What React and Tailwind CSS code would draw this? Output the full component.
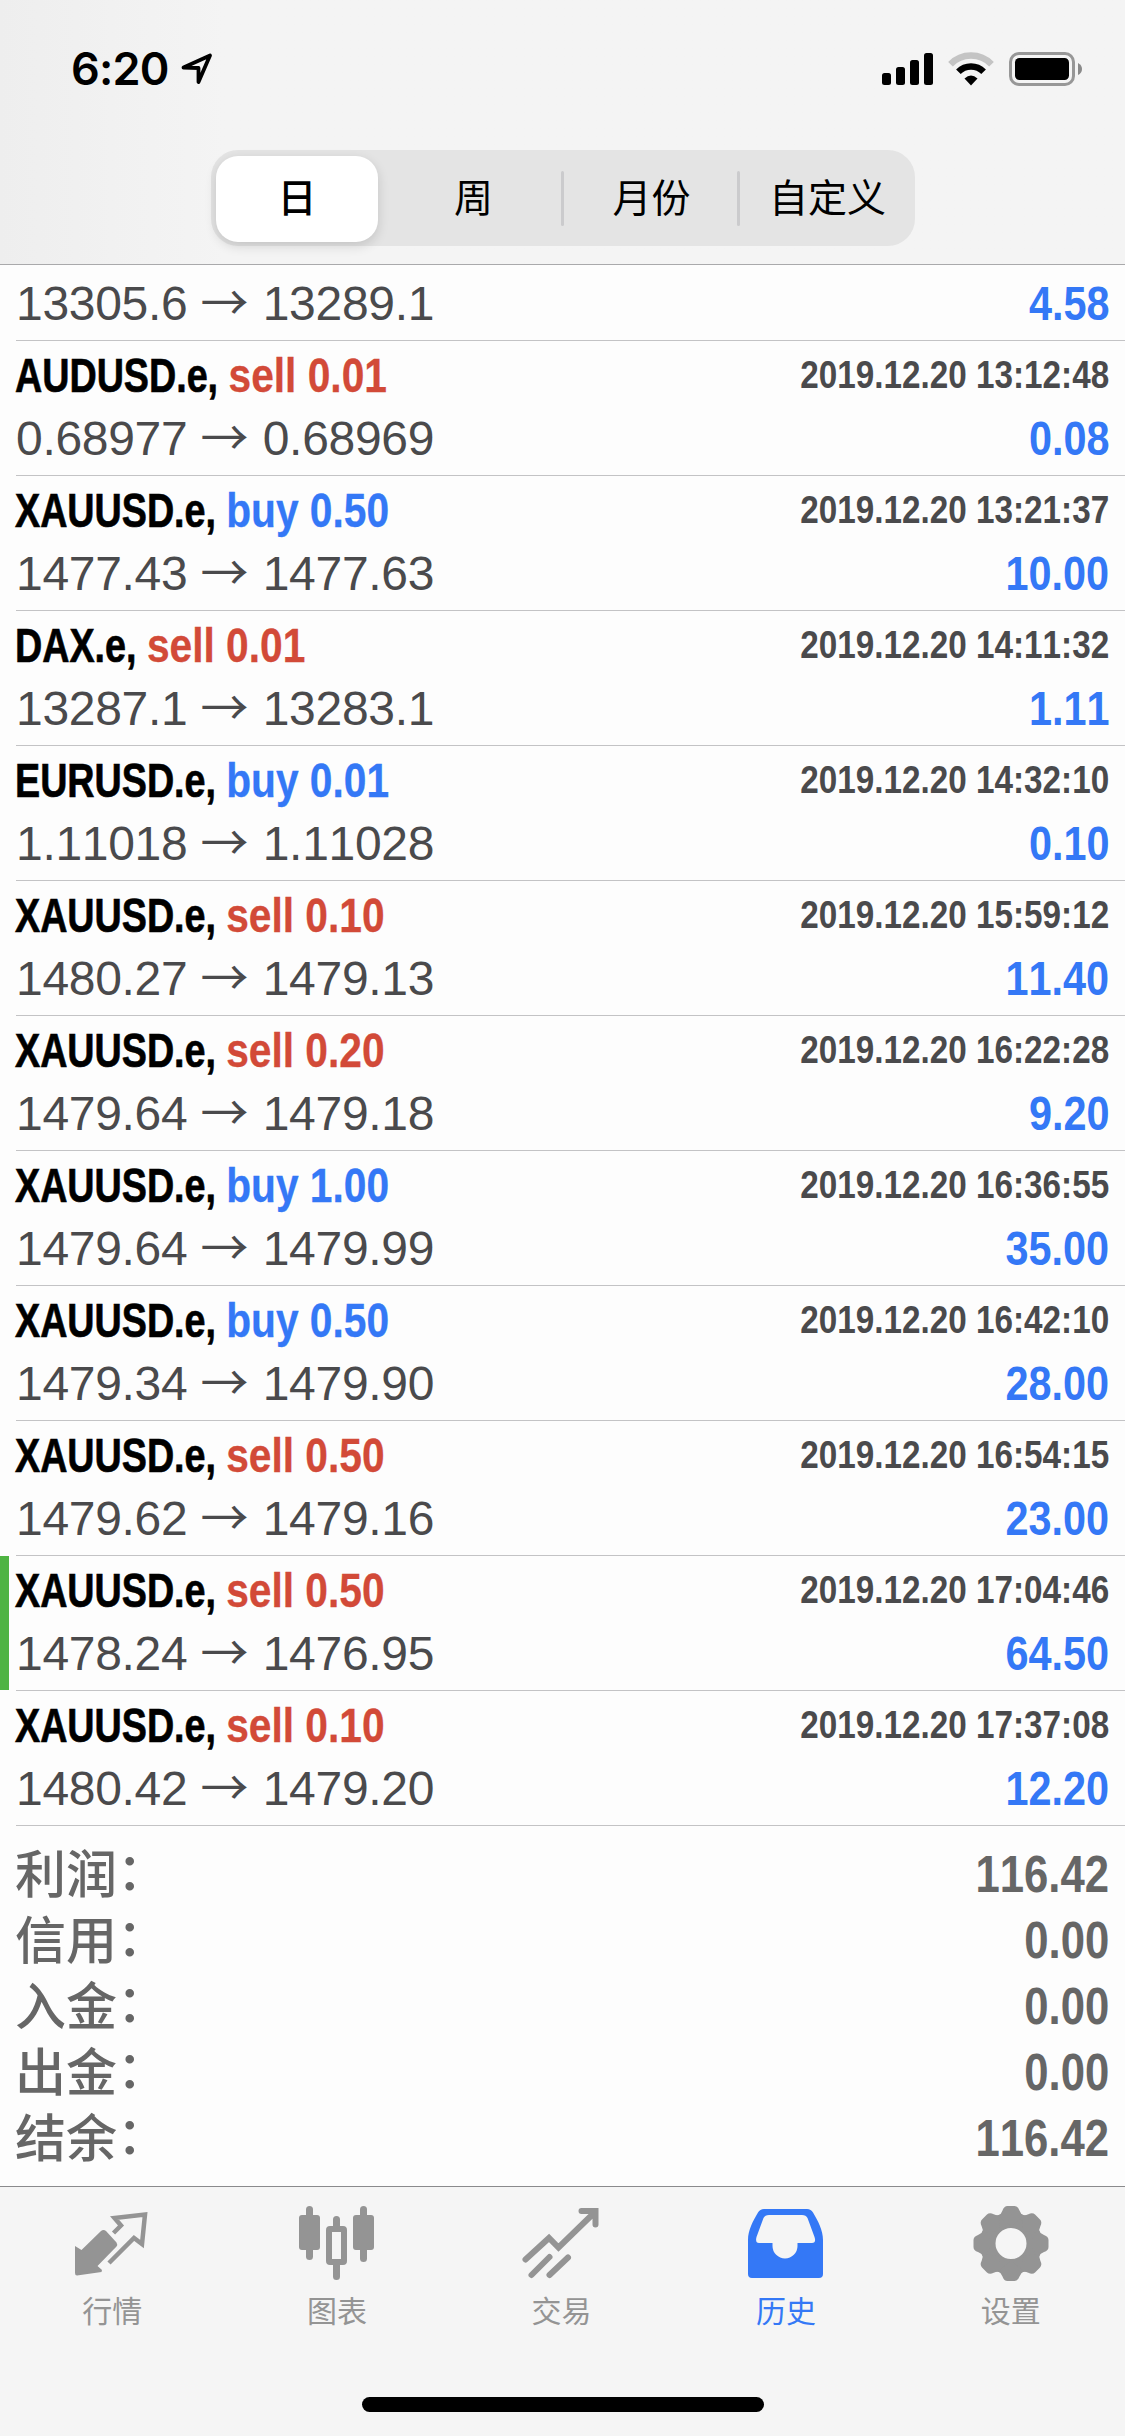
const TRADES = [
  { symbol: 'AUDUSD.e', side: 'sell', lots: '0.01', open: '0.68977', close: '0.68969', time: '2019.12.20 13:12:48', profit: '0.08' },
  { symbol: 'XAUUSD.e', side: 'buy', lots: '0.50', open: '1477.43', close: '1477.63', time: '2019.12.20 13:21:37', profit: '10.00' },
  { symbol: 'DAX.e', side: 'sell', lots: '0.01', open: '13287.1', close: '13283.1', time: '2019.12.20 14:11:32', profit: '1.11' },
  { symbol: 'EURUSD.e', side: 'buy', lots: '0.01', open: '1.11018', close: '1.11028', time: '2019.12.20 14:32:10', profit: '0.10' },
  { symbol: 'XAUUSD.e', side: 'sell', lots: '0.10', open: '1480.27', close: '1479.13', time: '2019.12.20 15:59:12', profit: '11.40' },
  { symbol: 'XAUUSD.e', side: 'sell', lots: '0.20', open: '1479.64', close: '1479.18', time: '2019.12.20 16:22:28', profit: '9.20' },
  { symbol: 'XAUUSD.e', side: 'buy', lots: '1.00', open: '1479.64', close: '1479.99', time: '2019.12.20 16:36:55', profit: '35.00' },
  { symbol: 'XAUUSD.e', side: 'buy', lots: '0.50', open: '1479.34', close: '1479.90', time: '2019.12.20 16:42:10', profit: '28.00' },
  { symbol: 'XAUUSD.e', side: 'sell', lots: '0.50', open: '1479.62', close: '1479.16', time: '2019.12.20 16:54:15', profit: '23.00' },
  { symbol: 'XAUUSD.e', side: 'sell', lots: '0.50', open: '1478.24', close: '1476.95', time: '2019.12.20 17:04:46', profit: '64.50', marked: true },
  { symbol: 'XAUUSD.e', side: 'sell', lots: '0.10', open: '1480.42', close: '1479.20', time: '2019.12.20 17:37:08', profit: '12.20' },
]

const SUMMARY = [
  ['利润', '116.42'],
  ['信用', '0.00'],
  ['入金', '0.00'],
  ['出金', '0.00'],
  ['结余', '116.42'],
]

const TABS = [
  { label: '行情', Icon: QuotesIcon },
  { label: '图表', Icon: ChartIcon },
  { label: '交易', Icon: TradeIcon },
  { label: '历史', Icon: HistoryIcon, active: true },
  { label: '设置', Icon: SettingsIcon },
]

export default function App() {
  return (
    <div className="flex h-[2436px] w-[1125px] flex-col overflow-hidden bg-[#fdfdfd] font-['Liberation_Sans','Noto_Sans_CJK_SC',sans-serif] [font-kerning:none]">
      <header className="h-[265px] shrink-0 border-b border-[#a9a9ab] bg-[#f4f4f4] bg-linear-to-r from-[#eeeeee] to-[#f4f4f4] to-20%">
        <StatusBar />
        <RangePicker />
      </header>

      <main className="h-[1921px] shrink-0">
        <div className="ml-4 h-[76px] border-b border-[#c3c3c5] pr-4">
          <PriceLine open="13305.6" close="13289.1" profit="4.58" className="pt-[11px]" />
        </div>
        {TRADES.map((trade) => <TradeRow key={trade.time} {...trade} />)}
        <Summary />
      </main>

      <TabBar />
    </div>
  )
}

function StatusBar() {
  return (
    <div className="flex h-[150px] items-start justify-between pt-[42px] pr-[43px] pl-[71px]">
      <div className="flex items-start gap-[12px]">
        <span className="font-['Inter',sans-serif] text-[45px] leading-[54px] font-semibold tracking-[-0.8px]">6:20</span>
        <svg className="mt-[10px]" width="32" height="34" viewBox="0 0 32 34" fill="none" stroke="#000" strokeWidth="3.8" strokeLinejoin="round">
          <path d="M2.5 15.5 29 3.5 17.5 30V16Z" />
        </svg>
      </div>
      <svg className="mt-[10px]" width="200" height="36" viewBox="0 0 200 36">
        <rect x="0" y="21" width="9" height="12" rx="2.5" />
        <rect x="14" y="15" width="9" height="18" rx="2.5" />
        <rect x="28" y="8" width="9" height="25" rx="2.5" />
        <rect x="42" y="1" width="9" height="32" rx="2.5" />
        <g fill="none" strokeWidth="6.5">
          <path d="M68.5 12.3A28.5 28.5 0 0 1 109.5 12.3" stroke="#c4c4c4" />
          <path d="M76.4 19.8A17.8 17.8 0 0 1 101.6 19.8" stroke="#000" />
        </g>
        <path d="M89 33.5 82.5 26.5Q89 20.5 95.5 26.5Z" />
        <rect x="128.5" y="1.5" width="63" height="31" rx="8.5" fill="none" stroke="#979797" strokeWidth="3" />
        <rect x="133" y="6" width="54" height="22" rx="4.5" />
        <path d="M196 11Q200 13 200 17T196 23Z" fill="#8a8a8a" />
      </svg>
    </div>
  )
}

function RangePicker() {
  return (
    <div className="mr-[210px] ml-[211px] grid h-24 grid-cols-4 rounded-[27px] bg-[#e4e4e4] text-[39px] leading-[86px] text-black">
      <div className="my-[5.5px] mr-[9px] ml-[5px] rounded-[22px] bg-white text-center font-medium shadow-[0_4px_12px_rgba(0,0,0,0.14)]">日</div>
      <div className="py-[5.5px] pr-[3px] text-center">周</div>
      <Segment>月份</Segment>
      <Segment>自定义</Segment>
    </div>
  )
}

function Segment({ children }) {
  return (
    <div className="-ml-[2px] flex items-center">
      <span className="h-[55px] w-[3px] rounded-full bg-[#cbcbcd]" />
      <span className="flex-1 text-center">{children}</span>
    </div>
  )
}

function TradeRow({ symbol, side, lots, open, close, time, profit, marked }) {
  return (
    <div className="flex h-[135px]">
      <div className={marked ? 'h-[134px] w-[9px] bg-[#4fb443]' : 'w-[9px]'} />
      <div className="ml-[7px] flex-1 border-b border-[#c3c3c5] pr-4">
        <div className="flex h-[70px] justify-between font-bold">
          <div className="-ml-px flex origin-left scale-x-[0.785] gap-[13px] pt-[7px] text-[48px] leading-[56px]">
            <span className="text-black [-webkit-text-stroke:0.7px]">{symbol},</span>
            <span className={`origin-left scale-x-[1.08] [-webkit-text-stroke:0.3px] ${side === 'buy' ? 'text-[#3478f6]' : 'text-[#d24a38]'}`}>{side} {lots}</span>
          </div>
          <div className="origin-right scale-x-[0.853] pt-[11px] text-[39px] leading-[46px] text-[#4a4a4c]">{time}</div>
        </div>
        <PriceLine open={open} close={close} profit={profit} />
      </div>
    </div>
  )
}

function PriceLine({ open, close, profit, className = '' }) {
  return (
    <div className={`flex justify-between text-[48px] leading-[56px] ${className}`}>
      <div className="tracking-[-0.3px] whitespace-pre text-[#4a4a4c]">
        {open} <span className="mr-[1.5px] inline-block font-['Noto_Sans_CJK_SC'] leading-[40px]">→</span> {close}
      </div>
      <div className="origin-right scale-x-[0.862] font-bold text-[#3478f6]">{profit}</div>
    </div>
  )
}

function Summary() {
  return (
    <dl className="pt-[15px] pr-4 pl-4 text-[51px] leading-[66px] text-[#666]">
      {SUMMARY.map(([label, value]) => (
        <div key={label} className="flex h-[66px] justify-between">
          <dt className="-ml-px pt-[2px] font-medium">{label}<span className="align-[3px] leading-none">：</span></dt>
          <dd className="origin-right scale-x-[0.856] pt-px font-bold">{value}</dd>
        </div>
      ))}
    </dl>
  )
}

function TabBar() {
  return (
    <nav className="h-[250px] shrink-0 border-t border-[#8a8a8c] bg-[#f5f5f5]">
      <div className="grid h-[210px] grid-cols-5 pr-[2px]">
        {TABS.map(({ label, Icon, active }) => (
          <div key={label} className={`flex flex-col items-center pt-[17px] ${active ? 'text-[#3478f6]' : 'text-[#949494]'}`}>
            <Icon />
            <span className="mt-[6px] text-[30px] leading-[44px]">{label}</span>
          </div>
        ))}
      </div>
      <div className="mx-auto h-[15px] w-[402px] rounded-full bg-black" />
    </nav>
  )
}

function QuotesIcon() {
  return (
    <svg width="80" height="80" viewBox="0 0 80 80" fill="currentColor">
      <path d="M3 42 9.5 46 29 27Q31.5 25 34 27L44.5 38.5Q46 41 44.5 42.5L25.5 62 30 66 29.5 68 5 71.5Q3 71.5 3 69Z" />
      <path d="M41.5 29 49 21.5 42.5 14 73 10.5 70 40 62 34 37 59" fill="none" stroke="currentColor" strokeWidth="4.5" />
    </svg>
  )
}

function ChartIcon() {
  return (
    <svg width="80" height="80" viewBox="0 0 80 80" fill="currentColor">
      <rect x="2" y="11" width="21" height="35" rx="3" />
      <rect x="9" y="2" width="7" height="54" rx="3.5" />
      <rect x="56" y="11" width="21" height="35" rx="3" />
      <rect x="63" y="2" width="7" height="56" rx="3.5" />
      <path d="M36 22V15.5a3.5 3.5 0 0 1 7 0V22Z" />
      <path d="M36 60V72.5a3.5 3.5 0 0 0 7 0V60Z" />
      <rect x="32" y="25" width="15" height="33" rx="1" fill="none" stroke="currentColor" strokeWidth="6" />
    </svg>
  )
}

function TradeIcon() {
  return (
    <svg width="80" height="80" viewBox="0 0 80 80" fill="none" stroke="currentColor" strokeWidth="6" strokeLinecap="round">
      <path d="M4.5 55.5 28 34 37.5 43.5 74 8M60.5 7H74.5V20.5" />
      <path d="M10.5 71 28.5 53M28.5 71 47 53.5" />
    </svg>
  )
}

function HistoryIcon() {
  return (
    <svg width="80" height="80" viewBox="0 0 80 80" fill="currentColor" fillRule="evenodd">
      <path d="M18 5H61Q65 5 67 8.5C72 17 77 26 77 36V70Q77 74 73 74H6Q2 74 2 70V36C2 26 7 17 12 8.5Q14 5 18 5ZM23 11Q19 11 17.500 14L10.5 33Q9 39 13 39H26.5V42A12.500 12.500 0 0 0 51.500 42V39H66Q70.500 39 68.500 33L61.500 14Q60 11 56 11Z" />
    </svg>
  )
}

function SettingsIcon() {
  return (
    <svg width="80" height="80" viewBox="0 0 80 80" fill="currentColor">
      <circle cx="40" cy="39.5" r="23.25" fill="none" stroke="currentColor" strokeWidth="15.5" />
      {[0, 45, 90, 135, 180, 225, 270, 315].map((angle) => (
        <path key={angle} transform={`rotate(${angle} 40 39.5)`} d="M27 12Q30.5 10 31.5 6.5Q33 2 36.5 2H43.5Q47 2 48.5 6.5Q49.5 10 53 12L40 22Z" />
      ))}
    </svg>
  )
}
